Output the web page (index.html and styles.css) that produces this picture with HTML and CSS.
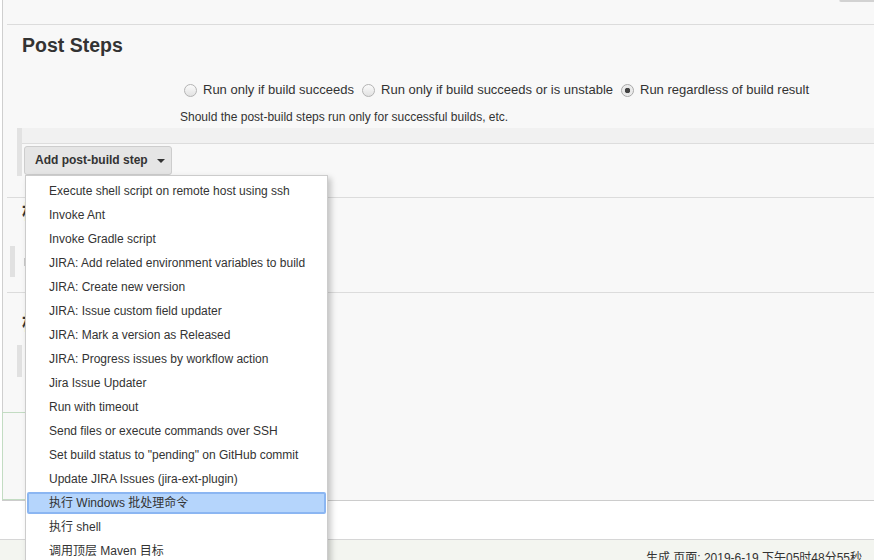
FILE: index.html
```html
<!DOCTYPE html>
<html lang="zh">
<head>
<meta charset="utf-8">
<title>Post Steps</title>
<link rel="stylesheet" href="styles.css">
</head>
<body>
<div class="main">
  <div class="form">
    <div class="topstrip"><span class="topbtn"></span></div>
    <section class="sec sec-post">
      <h2 class="sec-title">Post Steps</h2>
      <div class="radios">
        <label class="opt"><span class="radio"></span>Run only if build succeeds</label>
        <label class="opt"><span class="radio"></span>Run only if build succeeds or is unstable</label>
        <label class="opt"><span class="radio checked"></span>Run regardless of build result</label>
      </div>
      <div class="desc">Should the post-build steps run only for successful builds, etc.</div>
      <div class="repeat">
        <div class="band"></div>
        <div class="btn-wrap">
          <button class="btn" type="button">Add post-build step<span class="caret"></span></button>
          <ul class="menu">
            <li>Execute shell script on remote host using ssh</li>
            <li>Invoke Ant</li>
            <li>Invoke Gradle script</li>
            <li>JIRA: Add related environment variables to build</li>
            <li>JIRA: Create new version</li>
            <li>JIRA: Issue custom field updater</li>
            <li>JIRA: Mark a version as Released</li>
            <li>JIRA: Progress issues by workflow action</li>
            <li>Jira Issue Updater</li>
            <li>Run with timeout</li>
            <li>Send files or execute commands over SSH</li>
            <li>Set build status to "pending" on GitHub commit</li>
            <li>Update JIRA Issues (jira-ext-plugin)</li>
            <li class="active">执行 Windows 批处理命令</li>
            <li>执行 shell</li>
            <li>调用顶层 Maven 目标</li>
          </ul>
        </div>
      </div>
    </section>
    <section class="sec sec-build">
      <h2 class="sec-title sec-title-2">构建设置</h2>
      <div class="row-2">
        <span class="bar-a"></span>
        <span class="chk-edge"></span>
      </div>
    </section>
    <section class="sec sec-after">
      <h2 class="sec-title sec-title-3">构建后操作</h2>
      <div class="bar-b"></div>
    </section>
  </div>
  <div class="sticker"></div>
</div>
<div class="gap"></div>
<footer class="footer">生成 页面: 2019-6-19 下午05时48分55秒</footer>
</body>
</html>
```

FILE: styles.css
```css
html, body {
  margin: 0;
  padding: 0;
  height: 560px;
  overflow: hidden;
  background: #ffffff;
  font-family: "Liberation Sans", Arial, "Noto Sans CJK SC", sans-serif;
  color: #333333;
}

.main {
  margin-left: 2px;
  background: #f8f8f8;
  border-bottom: 1px solid #cccccc;
}

.form {
  height: 412px;
  border-left: 1px solid #cfcfcf;
  padding-left: 4px;
  box-sizing: border-box;
}

.topstrip {
  height: 24px;
  border-bottom: 1px solid #dcdcdc;
  display: flex;
  justify-content: flex-end;
  align-items: flex-start;
}

.topbtn {
  display: block;
  width: 34px;
  height: 0;
  border-bottom: 2px solid #d2d2d2;
  border-left: 1px solid #dddddd;
  border-bottom-left-radius: 3px;
}

.sec {
  border-bottom: 1px solid #dcdcdc;
}

.sec-post {
  height: 172px;
  padding-left: 15px;
  box-sizing: content-box;
}

.sec-title {
  margin: 0;
  padding-top: 9px;
  font-size: 19.5px;
  line-height: 23px;
  font-weight: bold;
  color: #333333;
}

.radios {
  margin-top: 25px;
  margin-left: 158px;
  display: flex;
  font-size: 13px;
  line-height: 16px;
  white-space: nowrap;
}

.opt {
  display: flex;
  align-items: center;
  margin-right: 4px;
}

.radio {
  display: inline-block;
  box-sizing: border-box;
  width: 13px;
  height: 13px;
  margin: 0 6px 0 4px;
  border: 1px solid #b4b4b4;
  border-radius: 50%;
  background: linear-gradient(#fbfbfb, #e2e2e2);
}

.radio.checked {
  background: radial-gradient(circle, #444444 0 2.5px, #e6e6e6 3px, #f6f6f6 100%);
  border-color: #a8a8a8;
}

.desc {
  margin-top: 12px;
  margin-left: 158px;
  font-size: 12px;
  line-height: 15px;
}

.repeat {
  margin-top: 3px;
  margin-left: -5px;
  border-left: 5px solid #e2e2e2;
  height: 48px;
}

.band {
  height: 15px;
  background: #f1f1f1;
  border-bottom: 1px solid #dddddd;
}

.btn-wrap {
  position: relative;
  display: inline-block;
  margin-top: 2px;
  margin-left: 2px;
}

.btn {
  display: flex;
  align-items: center;
  height: 29px;
  box-sizing: border-box;
  width: 148px;
  padding: 0 0 1px 10px;
  border: 1px solid #cdcdcd;
  border-radius: 3px;
  background: #e5e5e5;
  font-family: "Liberation Sans", Arial, sans-serif;
  font-size: 12px;
  font-weight: bold;
  color: #333333;
}

.caret {
  display: inline-block;
  width: 0;
  height: 0;
  margin-left: 9px;
  margin-top: 1px;
  border-left: 4px solid transparent;
  border-right: 4px solid transparent;
  border-top: 4px solid #333333;
}

.menu {
  position: absolute;
  z-index: 10;
  top: 100%;
  left: 1px;
  width: 303px;
  box-sizing: border-box;
  margin: 0;
  padding: 3px 0 0;
  list-style: none;
  background: #ffffff;
  border: 1px solid #cccccc;
  box-shadow: 3px 3px 6px rgba(0, 0, 0, 0.22);
  font-size: 12px;
  color: #333333;
}

.menu li {
  height: 24px;
  line-height: 24px;
  padding-left: 23px;
  white-space: nowrap;
}

.menu li.active {
  box-sizing: border-box;
  margin: 1px 1px 1px;
  height: 22px;
  line-height: 18px;
  padding-left: 20px;
  background: #b5d5fc;
  border: 2px solid #8bb6f2;
  border-radius: 2px;
}

.sec-build {
  height: 94px;
}

.sec-title-2 {
  padding-top: 3px;
  padding-left: 15px;
}

.row-2 {
  display: flex;
  align-items: flex-start;
  margin-top: 22px;
}

.bar-a {
  display: block;
  width: 5px;
  height: 31px;
  margin-left: 3px;
  background: #e1e1e1;
}

.chk-edge {
  display: block;
  width: 2px;
  height: 8px;
  margin-left: 9px;
  margin-top: 12px;
  background: #c9c9c9;
}

.sec-after {
  border-bottom: none;
}

.sec-title-3 {
  padding-top: 19px;
  padding-left: 15px;
}

.bar-b {
  width: 5px;
  height: 32px;
  margin-top: 10px;
  margin-left: 10px;
  background: #e1e1e1;
}

.sticker {
  width: 300px;
  height: 88px;
  box-sizing: border-box;
  border: 1px solid #c3dcc3;
  background: #f8f8f8;
}

.gap {
  height: 38px;
  background: #ffffff;
}

.footer {
  border-top: 1px solid #d6d6d6;
  background: #f3f5f0;
  padding: 10px 12px 0 0;
  text-align: right;
  font-size: 12px;
  line-height: 16px;
  color: #333333;
  height: 40px;
}
```
